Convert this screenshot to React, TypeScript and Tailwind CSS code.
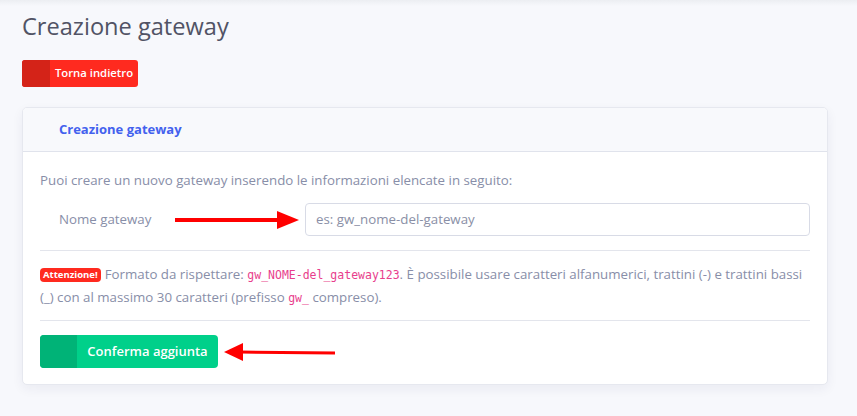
import React from 'react';

const font = { fontFamily: '"Open Sans", "Noto Sans", sans-serif' };
const mono = { fontFamily: '"DejaVu Sans Mono", monospace' };

function ArrowRight() {
    return (
        <svg width="129" height="20" viewBox="0 0 129 20" className="shrink-0">
            <line x1="0" y1="10" x2="106" y2="10" stroke="#ff0000" strokeWidth="4" />
            <polygon points="102,1 124,10 102,19" fill="#ff0000" />
        </svg>
    );
}

function ArrowLeft() {
    return (
        <svg width="112" height="20" viewBox="0 0 112 20" className="shrink-0">
            <polygon points="0,10 19,1 19,19" fill="#ff0000" />
            <line x1="16" y1="10" x2="111" y2="11" stroke="#ff0000" strokeWidth="3" />
        </svg>
    );
}

export default function App() {
    return (
        <div className="w-[857px] h-[416px] bg-[#f7f8fc] text-[#888ea8] overflow-hidden" style={font}>
            {/* top shade */}
            <div className="h-[6px] bg-gradient-to-b from-[#eceef2] to-[#f7f8fc]"></div>

            <div className="px-[22px]">
                <h1 className="text-[23.6px] leading-[30px] text-[#515365] mt-[5px]">Creazione gateway</h1>

                <button className="mt-[19px] flex h-[27px] w-[116px] rounded-[3px] overflow-hidden bg-[#ff2a1f] text-white text-[11.3px] font-semibold">
                    <span className="w-[28px] h-full bg-[#d42318]"></span>
                    <span className="flex-1 flex items-center justify-center">Torna indietro</span>
                </button>

                {/* Card */}
                <div className="mt-[20px] w-[806px] h-[278px] bg-white rounded-[5px] border border-[#e6e8ef] shadow-[0_4px_12px_rgba(30,40,90,0.06)] overflow-hidden">
                    <div className="h-[44px] bg-[#f8f9fc] border-b border-[#e0e3ec] flex items-center pl-[36px]">
                        <span className="text-[13px] font-bold text-[#4361ee]">Creazione gateway</span>
                    </div>

                    <div className="px-[17px]">
                        <p className="text-[13.3px] leading-[18px] mt-[19px]">
                            Puoi creare un nuovo gateway inserendo le informazioni elencate in seguito:
                        </p>

                        <div className="flex items-center mt-[14px]">
                            <span className="w-[135px] pl-[19px] text-[13.3px]">Nome gateway</span>
                            <ArrowRight />
                            <div className="ml-[1px] flex-1 h-[33px] rounded-[4px] border border-[#d8dbe6] flex items-center px-[10px] text-[13.3px] text-[#8a8fa6]">
                                es: gw_nome-del-gateway
                            </div>
                        </div>

                        <div className="mt-[14px] border-t border-[#e3e5ec]"></div>

                        <p className="mt-[12px] text-[13.3px] leading-[22px]">
                            <span className="inline-block align-[1px] bg-[#ff2a1f] text-white text-[9.5px] font-bold leading-[14px] px-[3px] rounded-[4px] mr-[4px]">Attenzione!</span>
                            Formato da rispettare: <code className="text-[#e83e8c] text-[11.5px]" style={mono}>gw_NOME-del_gateway123</code>. È possibile usare caratteri alfanumerici, trattini (-) e trattini bassi (_) con al massimo 30 caratteri (prefisso <code className="text-[#e83e8c] text-[11.5px]" style={mono}>gw_</code> compreso).
                        </p>

                        <div className="mt-[11px] border-t border-[#e3e5ec]"></div>

                        <div className="flex items-center mt-[14px]">
                            <button className="flex h-[33px] w-[178px] rounded-[4px] overflow-hidden bg-[#00d08a] text-white text-[13px] font-semibold">
                                <span className="w-[37px] h-full bg-[#00b377]"></span>
                                <span className="flex-1 flex items-center justify-center">Conferma aggiunta</span>
                            </button>
                            <div className="ml-[6px]">
                                <ArrowLeft />
                            </div>
                        </div>
                    </div>
                </div>
            </div>
        </div>
    );
}
